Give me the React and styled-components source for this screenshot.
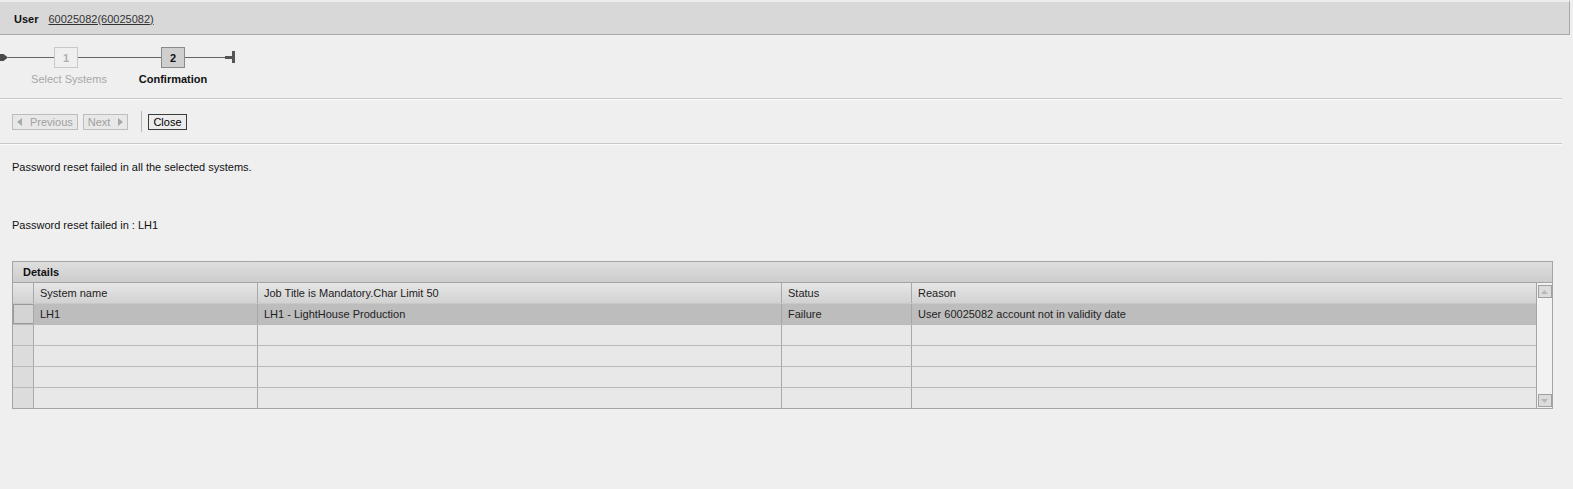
import React from "react";
import styled, { createGlobalStyle } from "styled-components";

const GlobalStyle = createGlobalStyle`
  body {
    margin: 0;
    background: #efefef;
    font-family: "Liberation Sans", Arial, sans-serif;
    font-size: 11px;
    color: #222;
  }
`;

const rows = [
  { system: "LH1", job: "LH1 - LightHouse Production", status: "Failure", reason: "User 60025082 account not in validity date" },
  null,
  null,
  null,
  null,
];

function App() {
  return (
    <Page>
      <GlobalStyle />
      <Header>
        <strong>User</strong>
        <UserLink href="#">60025082(60025082)</UserLink>
      </Header>

      <Roadmap>
        <StartArrow viewBox="0 0 8 9">
          <path d="M0 1 H3.5 L8 4.5 L3.5 8 H0 Z" fill="#4a4a4a" />
        </StartArrow>
        <Connector $w={46} />
        <Step>
          <StepBox>1</StepBox>
          <StepLabel>Select Systems</StepLabel>
        </Step>
        <Connector $w={83} />
        <Step>
          <StepBox $active>2</StepBox>
          <StepLabel $active>Confirmation</StepLabel>
        </Step>
        <Connector $w={40} />
        <EndMark viewBox="0 0 10 12">
          <rect x="0" y="5" width="7" height="3" fill="#555" />
          <rect x="7" y="0" width="3" height="12" fill="#555" />
        </EndMark>
      </Roadmap>
      <Divider />

      <Toolbar>
        <Button disabled>
          <Tri viewBox="0 0 5 8"><path d="M5 0 V8 L0 4 Z" fill="#a8a8a8" /></Tri>
          Previous
        </Button>
        <Button disabled>
          Next
          <Tri viewBox="0 0 5 8"><path d="M0 0 V8 L5 4 Z" fill="#a8a8a8" /></Tri>
        </Button>
        <ToolSep />
        <Button $primary>Close</Button>
      </Toolbar>
      <Divider />

      <Message $top={16}>Password reset failed in all the selected systems.</Message>
      <Message $top={45}>Password reset failed in : LH1</Message>

      <Panel>
        <PanelTitle>Details</PanelTitle>
        <PanelBody>
          <Grid>
            <HeadRow>
              <SelCell $head />
              <HeadCell>System name</HeadCell>
              <HeadCell>Job Title is Mandatory.Char Limit 50</HeadCell>
              <HeadCell>Status</HeadCell>
              <HeadCell>Reason</HeadCell>
            </HeadRow>
            {rows.map((r, i) => (
              <DataRow key={i} $selected={!!r}>
                <SelCell $selected={!!r} />
                <Cell>{r ? r.system : ""}</Cell>
                <Cell>{r ? r.job : ""}</Cell>
                <Cell>{r ? r.status : ""}</Cell>
                <Cell>{r ? r.reason : ""}</Cell>
              </DataRow>
            ))}
          </Grid>
          <Scrollbar>
            <ScrollBtn>
              <svg width="7" height="4" viewBox="0 0 7 4"><path d="M0 4 L3.5 0 L7 4 Z" fill="#b8b8b8" /></svg>
            </ScrollBtn>
            <ScrollBtn>
              <svg width="7" height="4" viewBox="0 0 7 4"><path d="M0 0 L3.5 4 L7 0 Z" fill="#b8b8b8" /></svg>
            </ScrollBtn>
          </Scrollbar>
        </PanelBody>
      </Panel>
    </Page>
  );
}

export default App;

const Page = styled.div`
  width: 1573px;
  min-height: 489px;
`;

const Header = styled.div`
  width: 1570px;
  height: 35px;
  box-sizing: border-box;
  border-top: 2px solid #ececec;
  border-bottom: 1px solid #a9a9a9;
  border-right: 1px solid #a9a9a9;
  background: #d8d8d8;
  display: flex;
  align-items: center;
  gap: 10px;
  padding: 2px 0 0 14px;
  strong {
    font-weight: bold;
    color: #111;
  }
`;

const UserLink = styled.a`
  color: #333;
  text-decoration: underline;
`;

const Roadmap = styled.div`
  display: flex;
  align-items: flex-start;
  height: 63px;
  padding-top: 12px;
  box-sizing: border-box;
`;

const StartArrow = styled.svg`
  width: 8px;
  height: 9px;
  margin-top: 6px;
`;

const Connector = styled.div`
  width: ${(p) => p.$w}px;
  height: 1px;
  margin-top: 10px;
  background: #666;
`;

const Step = styled.div`
  width: 24px;
  display: flex;
  flex-direction: column;
  align-items: center;
`;

const StepBox = styled.div`
  width: 24px;
  height: 21px;
  box-sizing: border-box;
  display: flex;
  align-items: center;
  justify-content: center;
  font-weight: bold;
  border: 1px solid ${(p) => (p.$active ? "#8a8a8a" : "#c8c8c8")};
  background: ${(p) => (p.$active ? "#cfcfcf" : "#efefef")};
  color: ${(p) => (p.$active ? "#111" : "#b0b0b0")};
`;

const StepLabel = styled.div`
  margin-top: 5px;
  margin-left: ${(p) => (p.$active ? "0" : "6px")};
  white-space: nowrap;
  line-height: 13px;
  font-weight: ${(p) => (p.$active ? "bold" : "normal")};
  color: ${(p) => (p.$active ? "#111" : "#a8a8a8")};
`;

const EndMark = styled.svg`
  width: 10px;
  height: 12px;
  margin-top: 4px;
`;

const Divider = styled.div`
  width: 1562px;
  height: 1px;
  background: #c8c8c8;
  border-bottom: 1px solid #fafafa;
`;

const Toolbar = styled.div`
  display: flex;
  align-items: center;
  gap: 5px;
  height: 43px;
  padding-left: 12px;
  box-sizing: border-box;
`;

const Button = styled.button`
  display: inline-flex;
  align-items: center;
  gap: 8px;
  height: 16px;
  padding: 0 4px;
  box-sizing: border-box;
  font-family: inherit;
  font-size: 11px;
  border: 1px solid ${(p) => (p.$primary ? "#3c3c3c" : "#bdbdbd")};
  background: ${(p) => (p.$primary ? "#ececec" : "#e8e8e8")};
  color: ${(p) => (p.$primary ? "#000" : "#a0a0a0")};
  border-radius: 0;
  &:disabled {
    color: #a0a0a0;
  }
`;

const Tri = styled.svg`
  width: 5px;
  height: 8px;
`;

const ToolSep = styled.div`
  width: 1px;
  height: 21px;
  background: #b8b8b8;
  margin: 0 1px 0 8px;
`;

const Message = styled.div`
  padding-left: 12px;
  margin-top: ${(p) => p.$top}px;
  line-height: 13px;
  color: #111;
`;

const Panel = styled.div`
  margin: 29px 0 0 12px;
  width: 1541px;
  box-sizing: border-box;
  border: 1px solid #a4a4a4;
  background: #f0f0f0;
`;

const PanelTitle = styled.div`
  height: 20px;
  line-height: 20px;
  padding-left: 10px;
  font-weight: bold;
  color: #111;
  background: linear-gradient(#dedede, #cdcdcd);
  border-bottom: 1px solid #a4a4a4;
`;

const PanelBody = styled.div`
  display: flex;
`;

const Grid = styled.div`
  width: 1523px;
  border-right: 1px solid #a4a4a4;
`;

const cols = "20px 224px 524px 130px 1fr";

const HeadRow = styled.div`
  display: grid;
  grid-template-columns: ${cols};
  height: 21px;
  box-sizing: border-box;
  background: linear-gradient(#e6e6e6, #d2d2d2);
  border-bottom: 1px solid #c8c8c8;
`;

const HeadCell = styled.div`
  display: flex;
  align-items: center;
  padding-left: 6px;
  border-left: 1px solid #a8a8a8;
  color: #222;
  white-space: nowrap;
`;

const DataRow = styled.div`
  display: grid;
  grid-template-columns: ${cols};
  height: 21px;
  box-sizing: border-box;
  background: ${(p) => (p.$selected ? "#bdbdbd" : "#e8e8e8")};
  border-bottom: 1px solid #b9b9b9;
  &:last-child {
    border-bottom: none;
    height: 20px;
  }
`;

const Cell = styled.div`
  display: flex;
  align-items: center;
  padding-left: 6px;
  border-left: 1px solid #a8a8a8;
  color: #222;
  white-space: nowrap;
`;

const SelCell = styled.div`
  box-sizing: border-box;
  background: ${(p) => (p.$head ? "transparent" : p.$selected ? "#d4d4d4" : "#dcdcdc")};
  border: ${(p) => (p.$selected ? "1px solid #999" : "none")};
  border-right: none;
`;

const Scrollbar = styled.div`
  flex: 1;
  display: flex;
  flex-direction: column;
  justify-content: space-between;
  align-items: center;
  padding: 2px 0 1px;
  background: #f2f2f2;
`;

const ScrollBtn = styled.div`
  width: 14px;
  height: 13px;
  box-sizing: border-box;
  border: 1px solid #a0a0a0;
  background: #dcdcdc;
  display: flex;
  align-items: center;
  justify-content: center;
`;
